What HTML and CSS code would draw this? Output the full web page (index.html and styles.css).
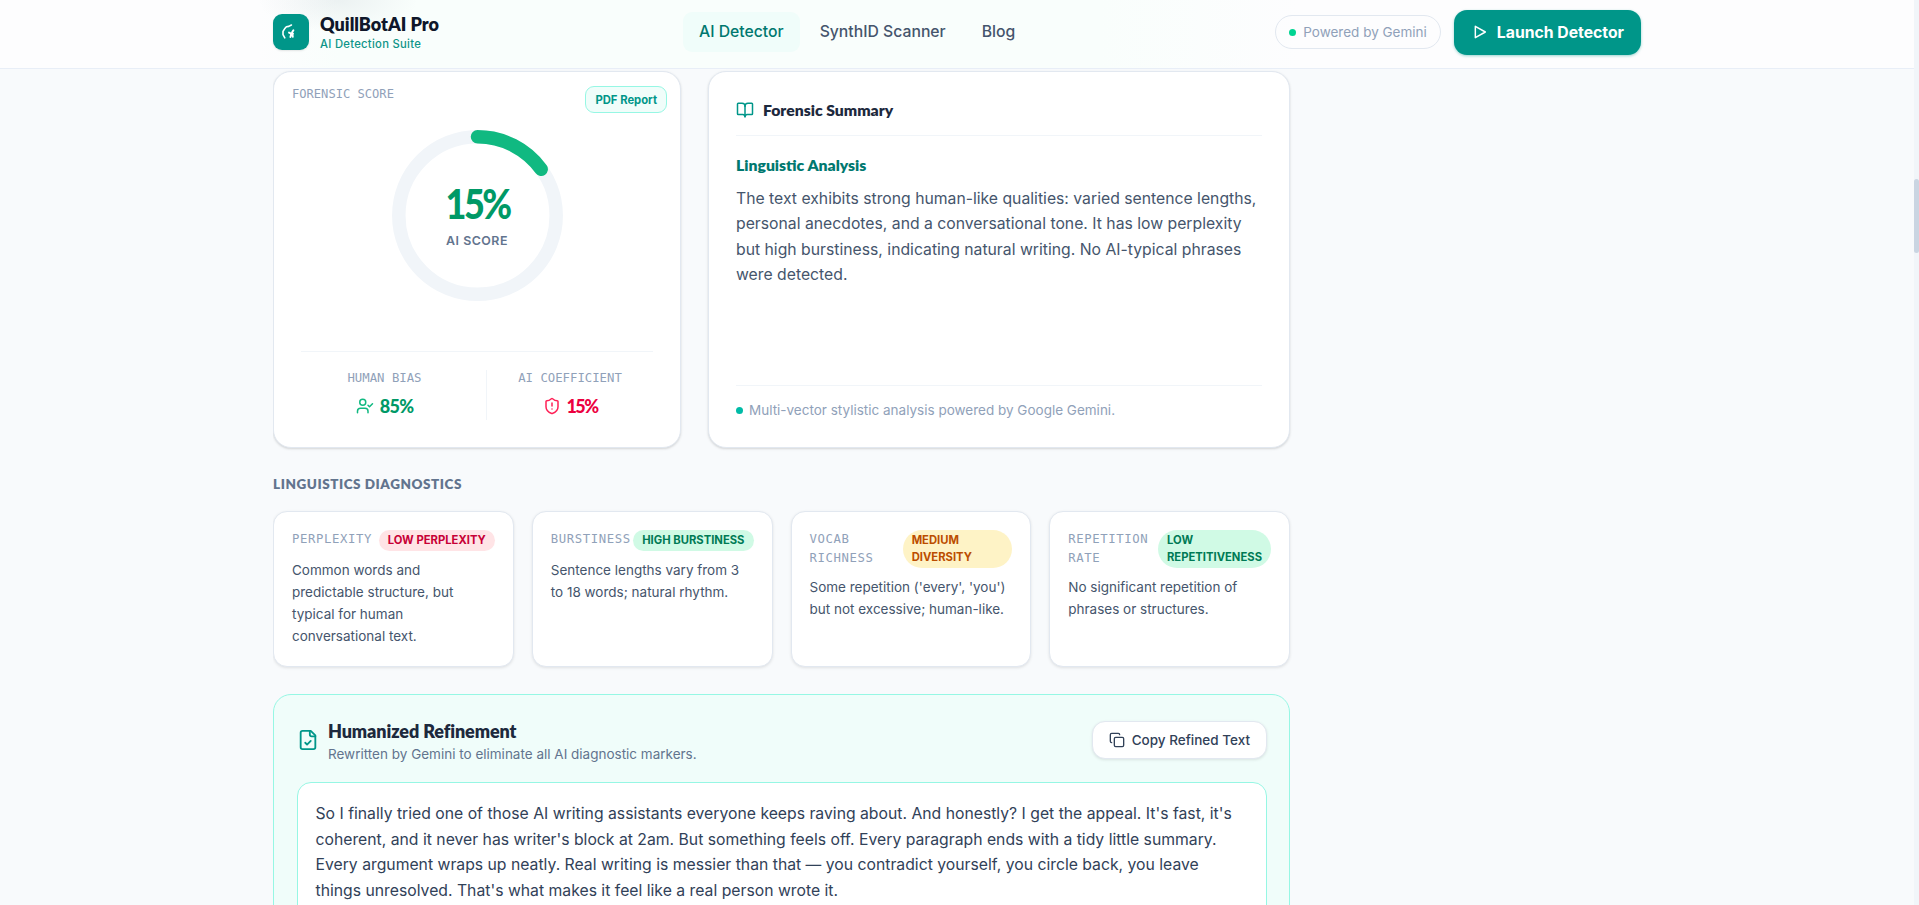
FILE: index.html
```html
<!DOCTYPE html>
<html lang="en">
  <head>
    <meta charset="utf-8">
    <title>QuillBotAI Pro - AI Detection Suite</title>
    <link rel="stylesheet" href="styles.css">
  </head>
  <body>
    <header class="header">
      <div class="header-inner">
        <div class="brand">
          <div class="logo">
            <svg width="36" height="36" viewBox="0 0 36 36" fill="none" stroke="#fff" stroke-width="1.6" stroke-linecap="round" stroke-linejoin="round">
              <path d="M18.4 11 L15.8 12.4 L13.4 12.8 L11.6 14.8 L10 17.4 L10 20.6 L11.8 23.8"/>
              <path d="M20.4 16.2 L19 18.6 M16 18.6 L17.6 19.4 L20 19.6 M17.4 23 L18.2 20 M19.4 20 L19.8 22.8" stroke-width="1.9"/>
            </svg>
          </div>
          <div class="brand-text">
            <div class="brand-name">QuillBotAI Pro</div>
            <div class="brand-sub">AI Detection Suite</div>
          </div>
        </div>
        <nav class="nav">
          <a class="nav-link active">AI Detector</a>
          <a class="nav-link">SynthID Scanner</a>
          <a class="nav-link">Blog</a>
        </nav>
        <div class="header-right">
          <div class="powered"><span class="dot"></span><span>Powered by Gemini</span></div>
          <button class="launch">
            <svg width="16" height="16" viewBox="0 0 24 24" fill="none" stroke="currentColor" stroke-width="2.2" stroke-linejoin="round"><path d="M5 3.5 L20 12 L5 20.5 Z"/></svg>
            <span>Launch Detector</span>
          </button>
        </div>
      </div>
    </header>

    <main class="main">
      <div class="results">
        <div class="top-row">
          <section class="card score-card">
            <div class="score-head">
              <span class="mono">FORENSIC SCORE</span>
              <button class="pdf">PDF Report</button>
            </div>
            <div class="ring">
              <svg width="171" height="171" viewBox="0 0 171 171" fill="none" stroke-width="13.5">
                <circle cx="85.5" cy="85.5" r="78.7" stroke="#f1f5f9"/>
                <circle cx="85.5" cy="85.5" r="78.7" stroke="#10b981" stroke-linecap="round" pathLength="100" stroke-dasharray="15 85" transform="rotate(-90 85.5 85.5)"/>
              </svg>
              <div class="ring-label">
                <div class="ring-value">15%</div>
                <div class="ring-caption">AI SCORE</div>
              </div>
            </div>
            <div class="split">
              <div class="split-item">
                <span class="mono">HUMAN BIAS</span>
                <div class="split-value green">
                  <svg width="18" height="18" viewBox="0 0 24 24" fill="none" stroke="#10b981" stroke-width="2" stroke-linecap="round" stroke-linejoin="round"><path d="m16 11 2 2 4-4"/><path d="M16 21v-2a4 4 0 0 0-4-4H6a4 4 0 0 0-4 4v2"/><circle cx="9" cy="7" r="4"/></svg>
                  <span>85%</span>
                </div>
              </div>
              <div class="split-item">
                <span class="mono">AI COEFFICIENT</span>
                <div class="split-value red">
                  <svg width="18" height="18" viewBox="0 0 24 24" fill="none" stroke="#ff2056" stroke-width="2" stroke-linecap="round" stroke-linejoin="round"><path d="M20 13c0 5-3.500 7.500-7.660 8.950a1 1 0 0 1-.670-.010C7.500 20.500 4 18 4 13V6a1 1 0 0 1 1-1c2 0 4.500-1.200 6.240-2.720a1.170 1.170 0 0 1 1.520 0C14.510 3.810 17 5 19 5a1 1 0 0 1 1 1z"/><path d="M12 8v4"/><path d="M12 16h.01"/></svg>
                  <span>15%</span>
                </div>
              </div>
            </div>
          </section>

          <section class="card summary-card">
            <div class="summary-head">
              <svg width="18" height="18" viewBox="0 0 24 24" fill="none" stroke="#009689" stroke-width="2" stroke-linecap="round" stroke-linejoin="round"><path d="M12 7v14"/><path d="M3 18a1 1 0 0 1-1-1V4a1 1 0 0 1 1-1h5a4 4 0 0 1 4 4 4 4 0 0 1 4-4h5a1 1 0 0 1 1 1v13a1 1 0 0 1-1 1h-6a3 3 0 0 0-3 3 3 3 0 0 0-3-3z"/></svg>
              <h3>Forensic Summary</h3>
            </div>
            <h4>Linguistic Analysis</h4>
            <p>The text exhibits strong human-like qualities: varied sentence lengths, personal anecdotes, and a conversational tone. It has low perplexity but high burstiness, indicating natural writing. No AI-typical phrases were detected.</p>
            <div class="summary-foot"><span class="dot"></span><span>Multi-vector stylistic analysis powered by Google Gemini.</span></div>
          </section>
        </div>

        <h2 class="section-title">LINGUISTICS DIAGNOSTICS</h2>

        <div class="metrics">
          <div class="metric">
            <div class="metric-head"><span class="mono">PERPLEXITY</span><span class="badge rose">LOW PERPLEXITY</span></div>
            <p>Common words and predictable structure, but typical for human conversational text.</p>
          </div>
          <div class="metric">
            <div class="metric-head"><span class="mono">BURSTINESS</span><span class="badge mint">HIGH BURSTINESS</span></div>
            <p>Sentence lengths vary from 3 to 18 words; natural rhythm.</p>
          </div>
          <div class="metric">
            <div class="metric-head"><span class="mono">VOCAB RICHNESS</span><span class="badge amber">MEDIUM DIVERSITY</span></div>
            <p>Some repetition ('every', 'you') but not excessive; human-like.</p>
          </div>
          <div class="metric">
            <div class="metric-head"><span class="mono">REPETITION RATE</span><span class="badge mint">LOW REPETITIVENESS</span></div>
            <p>No significant repetition of phrases or structures.</p>
          </div>
        </div>

        <section class="refine">
          <div class="refine-head">
            <svg width="22" height="22" viewBox="0 0 24 24" fill="none" stroke="#009689" stroke-width="2" stroke-linecap="round" stroke-linejoin="round"><path d="M15 2H6a2 2 0 0 0-2 2v16a2 2 0 0 0 2 2h12a2 2 0 0 0 2-2V7Z"/><path d="M14 2v4a2 2 0 0 0 2 2h4"/><path d="m9 15 2 2 4-4"/></svg>
            <div class="refine-title">
              <h3>Humanized Refinement</h3>
              <p>Rewritten by Gemini to eliminate all AI diagnostic markers.</p>
            </div>
            <button class="copy">
              <svg width="16" height="16" viewBox="0 0 24 24" fill="none" stroke="currentColor" stroke-width="2" stroke-linecap="round" stroke-linejoin="round"><rect x="8" y="8" width="14" height="14" rx="2"/><path d="M4 16c-1.100 0-2-.900-2-2V4c0-1.100.900-2 2-2h10c1.100 0 2 .900 2 2"/></svg>
              <span>Copy Refined Text</span>
            </button>
          </div>
          <div class="refine-text">So I finally tried one of those AI writing assistants everyone keeps raving about. And honestly? I get the appeal. It's fast, it's coherent, and it never has writer's block at 2am. But something feels off. Every paragraph ends with a tidy little summary. Every argument wraps up neatly. Real writing is messier than that — you contradict yourself, you circle back, you leave things unresolved. That's what makes it feel like a real person wrote it.</div>
        </section>
      </div>
    </main>
    <div class="scrollbar"><div class="thumb"></div></div>
  </body>
</html>
```
FILE: styles.css
```css
* {
  box-sizing: border-box;
}

html, body {
  margin: 0;
  height: 100%;
  overflow: hidden;
}

body {
  display: flex;
  flex-direction: column;
  background: #f8fafc;
  color: #45556c;
  font-family: Inter, sans-serif;
  font-size: 15.75px;
}

h2, h3, h4, p {
  margin: 0;
}

button {
  font-family: inherit;
  margin: 0;
}

svg {
  display: block;
  flex: none;
}

.mono {
  font-family: "DejaVu Sans Mono", monospace;
  font-size: 12.1px;
  color: #90a1b9;
}

/* header */
.header {
  flex: none;
  height: 69px;
  padding-right: 5px;
  border-bottom: 1px solid #e8eef7;
  background:
    radial-gradient(ellipse 80px 32px at 338px 0, rgba(100, 116, 139, .09), transparent),
    linear-gradient(90deg, transparent 258px, #f9fefc 340px, #f9fefc 1100px, transparent 1300px),
    #fdfdfe;
}

.header-inner {
  width: 1368px;
  height: 64px;
  margin: 0 auto;
  display: flex;
  justify-content: space-between;
  align-items: center;
}

.brand {
  display: flex;
  align-items: center;
  gap: 11px;
}

.logo {
  width: 36px;
  height: 36px;
  border-radius: 9px;
  background: #009689;
  box-shadow: 0 1px 2px rgba(0, 0, 0, .1);
}

.brand-name {
  font-family: Lato, sans-serif;
  font-size: 18px;
  font-weight: 800;
  line-height: 20px;
  color: #0f172a;
}

.brand-sub {
  margin-top: 4px;
  font-size: 11.25px;
  line-height: 13px;
  font-weight: 500;
  letter-spacing: .28px;
  color: #0d9488;
}

.nav {
  display: flex;
  gap: 4px;
}

.nav-link {
  padding: 0 16px;
  border-radius: 9px;
  font-size: 15.75px;
  font-weight: 500;
  line-height: 40px;
  color: #45556c;
}

.nav-link.active {
  background: #f0fdfa;
  color: #00786f;
}

.header-right {
  display: flex;
  justify-content: flex-end;
  align-items: center;
  gap: 13px;
}

.powered {
  height: 34px;
  padding: 0 13px;
  display: flex;
  align-items: center;
  gap: 7px;
  border: 1px solid #e2e8f0;
  border-radius: 17px;
  font-size: 13.5px;
  line-height: 30px;
  color: #90a1b9;
}

.dot {
  width: 7px;
  height: 7px;
  border-radius: 50%;
  background: #00d492;
}

.launch {
  height: 45px;
  padding: 0 17px 0 18px;
  display: flex;
  align-items: center;
  gap: 9px;
  border: 0;
  border-radius: 13px;
  background: #009689;
  box-shadow: 0 1px 3px rgba(0, 150, 137, .4);
  font-size: 15.75px;
  font-weight: 700;
  color: #fff;
}

/* results */
.main {
  flex: 1;
  min-height: 0;
  width: 1368px;
  margin-left: 273px;
  padding-top: 2px;
  overflow: hidden;
}

.results {
  width: 1017px;
}

.top-row {
  display: grid;
  grid-template-columns: 408px 582px;
  gap: 27px;
  height: 377px;
}

.card {
  border: 1px solid #e2e8f0;
  border-radius: 18px;
  background: #fff;
  box-shadow: 0 1px 3px rgba(0, 0, 0, .1), 0 1px 2px rgba(0, 0, 0, .06);
}

.score-card {
  display: flex;
  flex-direction: column;
  align-items: center;
}

.score-head {
  width: 100%;
  height: 58px;
  padding: 14px 13px 0 18px;
  display: flex;
  justify-content: space-between;
  align-items: flex-start;
}

.score-head .mono {
  line-height: 17px;
}

.pdf {
  height: 27px;
  padding: 0 9px;
  border: 1px solid #96f7e4;
  border-radius: 9px;
  background: #f0fdfa;
  font-size: 11.25px;
  font-weight: 700;
  line-height: 24px;
  color: #009689;
}

.ring {
  display: grid;
}

.ring > * {
  grid-area: 1 / 1;
}

.ring-label {
  padding-top: 51px;
  text-align: center;
}

.ring-value {
  font-family: Lato, sans-serif;
  font-size: 41px;
  font-weight: 900;
  line-height: 46px;
  letter-spacing: -3px;
  color: #009966;
  transform: scaleX(.88);
}

.ring-caption {
  margin-top: 5px;
  font-size: 12.4px;
  line-height: 17px;
  font-weight: 600;
  letter-spacing: .5px;
  color: #62748e;
}

.split {
  width: 352px;
  margin-top: 50px;
  padding-top: 18px;
  display: grid;
  grid-template-columns: 185px 1fr;
  border-top: 1px solid #f1f5f9;
}

.split-item {
  height: 50px;
  display: flex;
  flex-direction: column;
  align-items: center;
}

.split-item:first-child {
  padding-right: 18px;
}

.split-item + .split-item {
  border-left: 1px solid #f1f5f9;
}

.split-item .mono {
  font-size: 12.3px;
  line-height: 17px;
}

.split-value {
  margin-top: 8px;
  display: flex;
  align-items: center;
  gap: 6px;
  font-family: Lato, sans-serif;
  font-size: 18px;
  font-weight: 900;
  line-height: 22px;
  letter-spacing: -.7px;
}

.green {
  color: #009966;
}

.red {
  letter-spacing: -1.6px;
  color: #ec003f;
}

.summary-card {
  padding: 27px 27px 26px;
  display: flex;
  flex-direction: column;
}

.summary-head {
  height: 37px;
  display: flex;
  align-items: flex-start;
  gap: 9px;
  padding-top: 2px;
  border-bottom: 1px solid #f1f5f9;
}

.summary-head h3 {
  font-family: Lato, sans-serif;
  font-size: 15.75px;
  font-weight: 800;
  line-height: 18px;
  color: #1d293d;
}

.summary-card h4 {
  margin-top: 19px;
  font-family: Lato, sans-serif;
  font-size: 15.75px;
  font-weight: 800;
  line-height: 20px;
  color: #00786f;
}

.summary-card p {
  margin-top: 10.5px;
  line-height: 25.6px;
}

.summary-foot {
  height: 36px;
  margin-top: auto;
  padding-top: 13px;
  display: flex;
  align-items: center;
  gap: 6px;
  border-top: 1px solid #f1f5f9;
  font-size: 13.5px;
  color: #90a1b9;
}

.summary-foot .dot {
  background: #00bba7;
}

.section-title {
  margin: 27px 0 18px;
  font-family: Lato, sans-serif;
  font-size: 13.5px;
  font-weight: 800;
  line-height: 18px;
  letter-spacing: .55px;
  color: #62748e;
}

.metrics {
  display: grid;
  grid-template-columns: repeat(4, 1fr);
  gap: 18px;
}

.metric {
  height: 156px;
  padding: 18px;
  border: 1px solid #e2e8f0;
  border-radius: 14px;
  background: #fff;
  box-shadow: 0 1px 3px rgba(0, 0, 0, .1);
}

.metric-head {
  display: flex;
  justify-content: space-between;
  align-items: flex-start;
}

.metric-head .mono {
  font-size: 12.3px;
  line-height: 19px;
  letter-spacing: .6px;
}

.badge {
  padding: 2px 9px;
  border-radius: 19px;
  font-size: 11.25px;
  font-weight: 700;
  line-height: 17px;
}

.rose {
  background: #ffe4e6;
  color: #c70036;
}

.mint {
  background: #d0fae5;
  color: #007a55;
}

.amber {
  background: #fef3c6;
  color: #bb4d00;
}

.metric p {
  margin-top: 8px;
  font-size: 13.5px;
  line-height: 22px;
}

/* refinement */
.refine {
  height: 300px;
  margin-top: 27px;
  padding: 26px 22px 27px 23px;
  border: 1px solid #96f7e4;
  border-radius: 18px;
  background: #f0fdfa;
}

.refine-head {
  height: 61px;
  display: flex;
  align-items: flex-start;
}

.refine-head > svg {
  margin-top: 8px;
}

.refine-title {
  margin-left: 9px;
}

.refine-title h3 {
  font-family: Lato, sans-serif;
  font-size: 18px;
  font-weight: 800;
  line-height: 21px;
  letter-spacing: -.1px;
  color: #1d293d;
}

.refine-title p {
  margin-top: 3px;
  font-size: 13.5px;
  line-height: 18px;
  color: #62748e;
}

.copy {
  height: 38px;
  margin-left: auto;
  padding: 0 16px;
  display: flex;
  align-items: center;
  gap: 7px;
  border: 1px solid #e2e8f0;
  border-radius: 13px;
  background: #fff;
  box-shadow: 0 1px 3px rgba(0, 0, 0, .1);
  font-size: 13.5px;
  font-weight: 500;
  color: #314158;
}

.refine-text {
  height: 240px;
  padding: 18px 18px 18px 17.5px;
  border: 1px solid #96f7e4;
  border-radius: 14px;
  background: #fff;
  line-height: 25.6px;
  color: #314158;
}

/* page scrollbar */
.scrollbar {
  position: fixed;
  top: 0;
  right: 0;
  width: 5px;
  height: 100%;
  padding-top: 179px;
  background: #f1f5f9;
}

.thumb {
  height: 74px;
  border-radius: 3px;
  background: #cad5e2;
}
```
